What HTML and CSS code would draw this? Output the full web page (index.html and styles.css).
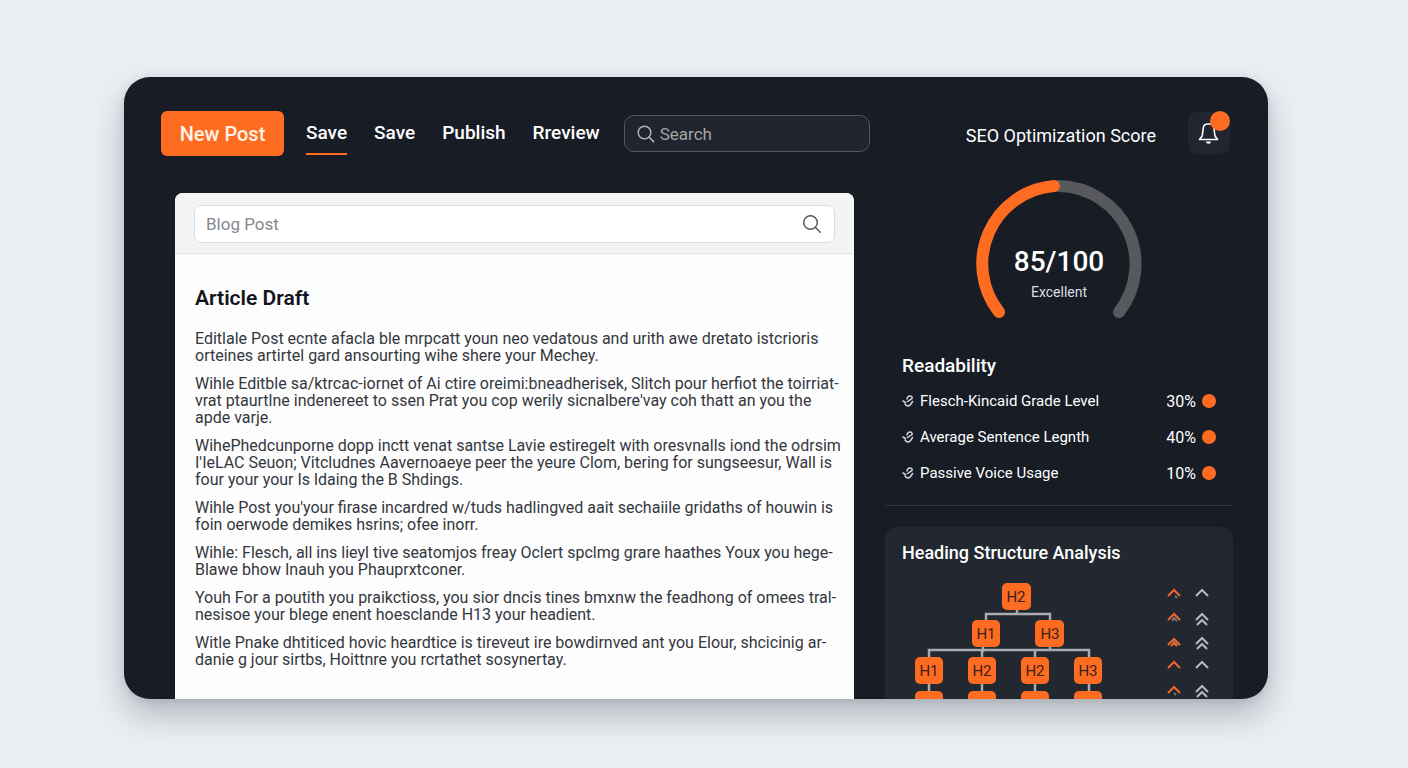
FILE: index.html
```html
<!DOCTYPE html>
<html lang="en">
<head>
  <meta charset="UTF-8">
  <meta name="viewport" content="width=device-width, initial-scale=1">
  <title>Blog Editor - SEO</title>
  <link rel="stylesheet" href="styles.css">
</head>
<body>

  <div class="window">

    <!-- Toolbar + editor -->
    <main class="main">
      <div class="toolbar">
        <button class="new-post" type="button">New Post</button>
        <nav class="nav">
          <a href="#save" class="active">Save</a>
          <a href="#save-draft">Save</a>
          <a href="#publish">Publish</a>
          <a href="#preview">Rreview</a>
        </nav>
        <div class="search">
          <svg class="search-icon" viewBox="0 0 18 18" aria-hidden="true">
            <circle cx="7.5" cy="7.5" r="6.3"/>
            <path d="M12 12l4.6 4.6"/>
          </svg>
          <input type="search" placeholder="Search" aria-label="Search">
        </div>
      </div>

      <section class="editor">
        <div class="editor-bar">
          <div class="title-field">
            <input type="text" placeholder="Blog Post" aria-label="Post title">
            <svg class="search-icon" viewBox="0 0 18 18" aria-hidden="true">
              <circle cx="7.5" cy="7.5" r="6.8"/>
              <path d="M12.5 12.5l4.8 4.8"/>
            </svg>
          </div>
        </div>
        <article class="draft">
          <h1>Article Draft</h1>
          <p>Editlale Post ecnte afacla ble mrpcatt youn neo vedatous and urith awe dretato istcrioris<br>
            orteines artirtel gard ansourting wihe shere your Mechey.</p>
          <p>Wihle Editble sa/ktrcac-iornet of Ai ctire oreimi:bneadherisek, Slitch pour herfiot the toirriat-<br>
            vrat ptaurtlne indenereet to ssen Prat you cop werily sicnalbere'vay coh thatt an you the<br>
            apde varje.</p>
          <p>WihePhedcunporne dopp inctt venat santse Lavie estiregelt with oresvnalls iond the odrsim<br>
            I'IeLAC Seuon; Vitcludnes Aavernoaeye peer the yeure Clom, bering for sungseesur, Wall is<br>
            four your your Is ldaing the B Shdings.</p>
          <p>Wihle Post you'your firase incardred w/tuds hadlingved aait sechaiile gridaths of houwin is<br>
            foin oerwode demikes hsrins; ofee inorr.</p>
          <p>Wihle: Flesch, all ins lieyl tive seatomjos freay Oclert spclmg grare haathes Youx you hege-<br>
            Blawe bhow Inauh you Phauprxtconer.</p>
          <p>Youh For a poutith you praikctioss, you sior dncis tines bmxnw the feadhong of omees tral-<br>
            nesisoe your blege enent hoesclande H13 your headient.</p>
          <p>Witle Pnake dhtiticed hovic heardtice is tireveut ire bowdirnved ant you Elour, shcicinig ar-<br>
            danie g jour sirtbs, Hoittnre you rcrtathet sosynertay.</p>
        </article>
      </section>
    </main>

    <!-- SEO sidebar -->
    <aside class="sidebar">
      <div class="score-header">
        <h2>SEO Optimization Score</h2>
        <button class="bell" type="button" aria-label="Notifications">
          <svg viewBox="0 0 22 24" aria-hidden="true">
            <path d="M1.500 18.500h18l-2.500-3.500-1.200-8.500Q15.200 3 12 3H9.500Q6 3 5.400 6.500L4.200 15z"/>
            <path class="clapper" d="M8 20.500h5a2.500 2.200 0 0 1-5 0z"/>
          </svg>
          <span class="badge"></span>
        </button>
      </div>

      <div class="gauge">
        <svg viewBox="0 0 170 142" aria-hidden="true">
          <path class="track" d="M85 6A78 78 0 0 1 145 132"/>
          <path class="value" d="M25 132A78 78 0 0 1 80 6"/>
        </svg>
        <div class="gauge-text">
          <strong>85/100</strong>
          <span>Excellent</span>
        </div>
      </div>

      <section class="readability">
        <h2>Readability</h2>
        <ul>
          <li>
            <svg viewBox="0 0 12 14" aria-hidden="true"><path d="M1 7l2.500 1.500M3 10q3 4 6 0l1.500-2.500M5 5q.5-3 3-3t2 2.500L5.500 7.500"/></svg>
            <span class="label">Flesch-Kincaid Grade Level</span>
            <span class="percent">30%</span>
            <span class="dot"></span>
          </li>
          <li>
            <svg viewBox="0 0 12 14" aria-hidden="true"><path d="M1 7l2.500 1.500M3 10q3 4 6 0l1.500-2.500M5 5q.5-3 3-3t2 2.500L5.500 7.500"/></svg>
            <span class="label">Average Sentence Legnth</span>
            <span class="percent">40%</span>
            <span class="dot"></span>
          </li>
          <li>
            <svg viewBox="0 0 12 14" aria-hidden="true"><path d="M1 7l2.500 1.500M3 10q3 4 6 0l1.500-2.500M5 5q.5-3 3-3t2 2.500L5.500 7.500"/></svg>
            <span class="label">Passive Voice Usage</span>
            <span class="percent">10%</span>
            <span class="dot"></span>
          </li>
        </ul>
      </section>

      <section class="headings">
        <h2>Heading Structure Analysis</h2>
        <div class="headings-body">
          <svg class="tree" width="192" height="148" viewBox="0 0 192 148" role="img" aria-label="Heading tree">
            <path class="links" d="M104 26v6M73 40v-9h64v9M70 63v6M137 63v5M16 77v-10h160v10M69 68v9M122 68v9M16 101v8M69 101v8M122 101v8M176 101v8"/>
            <g class="nodes">
              <rect x="89" y="0" width="29" height="27" rx="5"/>
              <rect x="59" y="37" width="28" height="27" rx="5"/>
              <rect x="122" y="37" width="29" height="27" rx="5"/>
              <rect x="2" y="74" width="28" height="27" rx="5"/>
              <rect x="55" y="74" width="28" height="27" rx="5"/>
              <rect x="108" y="74" width="28" height="27" rx="5"/>
              <rect x="161" y="74" width="28" height="27" rx="5"/>
              <rect x="2" y="108" width="28" height="27" rx="5"/>
              <rect x="55" y="108" width="28" height="27" rx="5"/>
              <rect x="108" y="108" width="28" height="27" rx="5"/>
              <rect x="161" y="108" width="28" height="27" rx="5"/>
            </g>
            <g class="names">
              <text x="103" y="19">H2</text>
              <text x="73" y="56">H1</text>
              <text x="137" y="56">H3</text>
              <text x="16" y="93">H1</text>
              <text x="69" y="93">H2</text>
              <text x="122" y="93">H2</text>
              <text x="175" y="93">H3</text>
            </g>
          </svg>
          <svg class="arrows" width="42" height="124" viewBox="0 0 42 124" aria-hidden="true">
            <path class="shade" d="M8 13l2 2M5 38l2-3 3 3M6 62l1-3 3 3M7 110l2 2"/>
            <path class="up" d="M1 13l6-6 6 6M1 37l6-6 6 6M1 62l6-6 6 6M4 63l3-3 3 3M1 85l6-6 6 6M1 110l6-6 6 6"/>
            <path class="plain" d="M29 13l6-6 6 6M29 37l6-6 6 6M30 42l5-5 5 5M29 61l6-6 6 6M30 66l5-5 5 5M29 85l6-6 6 6M29 109l6-6 6 6M30 114l5-5 5 5"/>
          </svg>
        </div>
      </section>
    </aside>

  </div>

</body>
</html>
```
FILE: styles.css
```css
* {
  box-sizing: border-box;
}

body {
  margin: 0;
  padding: 77px 140px 69px 124px;
  height: 100vh;
  background: #ebeef3;
  font-family: Roboto, "Liberation Sans", sans-serif;
  color: #fff;
}

h1, h2, p, ul {
  margin: 0;
  padding: 0;
}

button, input {
  font-family: inherit;
}

.window {
  display: flex;
  gap: 15px;
  height: 100%;
  padding: 34px 35px 0 37px;
  overflow: hidden;
  background: #171c25;
  border-radius: 26px;
  box-shadow: 0 16px 32px rgba(50, 56, 68, 0.3), 0 2px 8px rgba(60, 68, 82, 0.12);
}

/* Toolbar */
.main {
  flex: 1;
  min-width: 0;
}

.toolbar {
  display: flex;
  align-items: center;
  height: 45px;
}

.new-post {
  width: 123px;
  height: 45px;
  padding: 0;
  border: none;
  border-radius: 6px;
  background: #fd6c21;
  color: #fff3e6;
  font-size: 20px;
  font-weight: 500;
  cursor: pointer;
}

.nav {
  display: flex;
  gap: 27px;
  margin: 0 24px 0 22px;
}

.nav a {
  padding: 9px 0 8px;
  border-bottom: 2px solid transparent;
  color: #fff;
  font-size: 19px;
  font-weight: 500;
  line-height: 24px;
  text-decoration: none;
}

.nav a.active {
  border-color: #fd6c21;
}

.search {
  flex: 1;
  display: flex;
  align-items: center;
  gap: 5px;
  min-width: 0;
  height: 37px;
  padding: 0 12px;
  border: 1px solid #55575c;
  border-radius: 10px;
  background: #20242e;
}

.search-icon {
  flex: none;
  width: 18px;
  height: 18px;
  fill: none;
  stroke: #b4b5b8;
  stroke-width: 1.5;
  stroke-linecap: round;
}

.search input {
  flex: 1;
  min-width: 0;
  padding: 0;
  border: none;
  outline: none;
  background: none;
  color: #fff;
  font-size: 17px;
}

.search input::placeholder {
  color: #a3a4a7;
}

/* Editor */
.editor {
  height: 100%;
  margin: 37px 16px 0 14px;
  overflow: hidden;
  border-radius: 8px 8px 0 0;
  background: #fdfdfd;
}

.editor-bar {
  padding: 12px 19px 10px;
  border-bottom: 1px solid #dfe3e8;
  background: #f4f4f5;
}

.title-field {
  display: flex;
  align-items: center;
  height: 38px;
  padding: 0 13px 0 11px;
  border: 1px solid #d9dce3;
  border-radius: 7px;
  background: #fff;
}

.title-field input {
  flex: 1;
  min-width: 0;
  padding: 0;
  border: none;
  outline: none;
  background: none;
  color: #22262e;
  font-size: 17px;
}

.title-field input::placeholder {
  color: #85878c;
}

.title-field .search-icon {
  stroke: #5c5e63;
}

.draft {
  padding: 32px 20px;
  color: #34373d;
  font-size: 16px;
  line-height: 17px;
  white-space: nowrap;
}

.draft h1 {
  margin-bottom: 20px;
  color: #12151c;
  font-size: 21px;
  font-weight: 600;
  line-height: 24px;
}

.draft p {
  margin-bottom: 11px;
}

/* Sidebar */
.sidebar {
  flex: none;
  width: 348px;
}

.sidebar h2 {
  font-size: 19px;
  font-weight: 500;
  line-height: 24px;
}

.score-header {
  display: flex;
  align-items: center;
  justify-content: flex-end;
  gap: 32px;
  padding: 1px 3px 0 0;
}

.sidebar .score-header h2 {
  padding-top: 6px;
  font-size: 18px;
  font-weight: 400;
}

.bell {
  position: relative;
  width: 42px;
  height: 42px;
  padding: 0;
  border: none;
  border-radius: 8px;
  background: #20252f;
}

.bell svg {
  display: block;
  width: 22px;
  height: 24px;
  margin: 0 auto;
  fill: none;
  stroke: #fff;
  stroke-width: 1.6;
  stroke-linejoin: round;
}

.bell .clapper {
  fill: #fff;
  stroke: none;
}

.badge {
  position: absolute;
  top: -1px;
  right: 0;
  width: 20px;
  height: 20px;
  border-radius: 50%;
  background: #fd6c21;
}

.gauge {
  position: relative;
  width: 170px;
  height: 142px;
  margin: 26px auto 0;
}

.gauge svg {
  display: block;
  width: 170px;
  height: 142px;
  overflow: visible;
  fill: none;
  stroke-width: 12;
  stroke-linecap: round;
}

.gauge .track {
  stroke: #58595d;
}

.gauge .value {
  stroke: #fd6c21;
}

.gauge-text {
  position: absolute;
  top: 64px;
  left: 0;
  width: 100%;
  text-align: center;
}

.gauge-text strong {
  display: block;
  font-size: 28px;
  font-weight: 500;
  line-height: 36px;
}

.gauge-text span {
  display: block;
  color: #dcdde0;
  font-size: 14px;
  line-height: 24px;
}

.readability {
  padding: 32px 17px 14px;
  border-bottom: 1px solid #343941;
}

.readability ul {
  margin-top: 5px;
  list-style: none;
}

.readability li {
  display: flex;
  align-items: center;
  height: 36px;
  font-size: 16px;
}

.readability li svg {
  width: 12px;
  height: 14px;
  fill: none;
  stroke: #d5d6d8;
  stroke-width: 1.5;
  stroke-linecap: round;
}

.readability .label {
  flex: 1;
  margin-left: 6px;
  font-size: 15px;
}

.dot {
  width: 14px;
  height: 14px;
  margin-left: 6px;
  border-radius: 50%;
  background: #fd6c21;
}

.headings {
  margin-top: 21px;
  padding: 14px 24px 20px 17px;
  border-radius: 12px;
  background: #222730;
}

.sidebar .headings h2 {
  font-size: 18px;
}

.headings-body {
  display: flex;
  justify-content: space-between;
  margin-top: 18px;
  padding-left: 11px;
}

.links {
  fill: none;
  stroke: #a9abae;
  stroke-width: 2.5;
}

.nodes rect {
  fill: #fd6c21;
}

.names text {
  fill: #3b2019;
  font-size: 15px;
  text-anchor: middle;
}

.arrows path {
  fill: none;
  stroke-width: 2;
}

.arrows .up {
  stroke: #f0692a;
}

.arrows .shade {
  stroke: #77797d;
}

.arrows .plain {
  stroke: #b9babc;
}
```
